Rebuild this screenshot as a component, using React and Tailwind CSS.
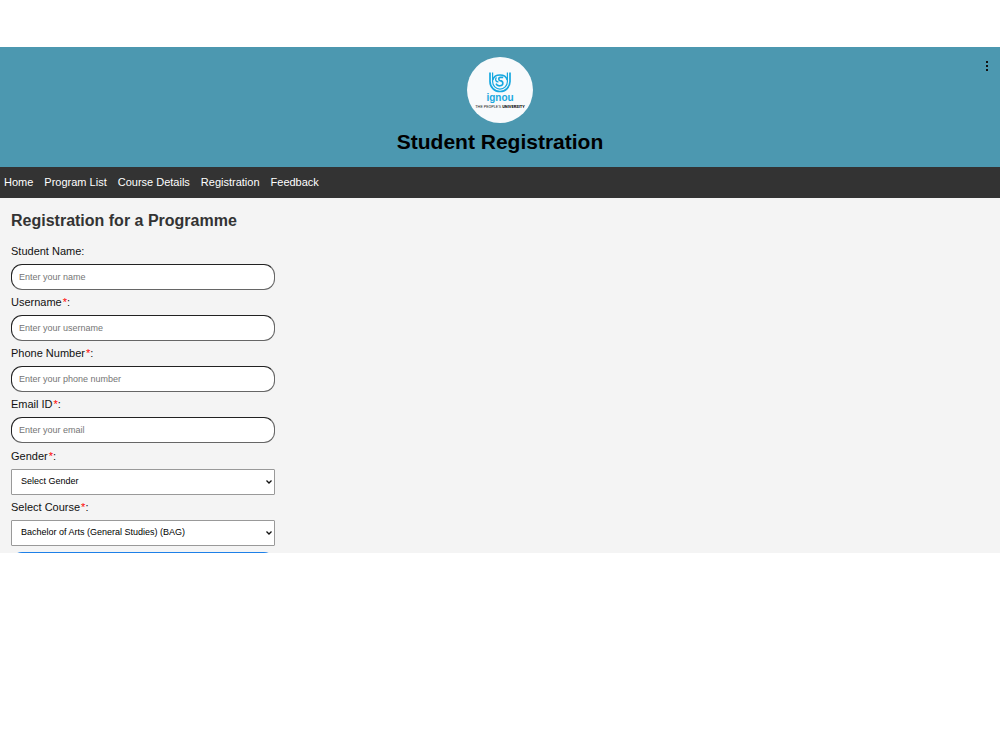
import React, { useState } from 'react';

const navLinks = ['Home', 'Program List', 'Course Details', 'Registration', 'Feedback'];

const textFields = [
  { id: 'name', label: 'Student Name', placeholder: 'Enter your name', type: 'text', required: false },
  { id: 'username', label: 'Username', placeholder: 'Enter your username', type: 'text', required: true },
  { id: 'phone', label: 'Phone Number', placeholder: 'Enter your phone number', type: 'tel', required: true },
  { id: 'email', label: 'Email ID', placeholder: 'Enter your email', type: 'email', required: true },
];

const selectFields = [
  { id: 'gender', label: 'Gender', options: ['Select Gender', 'Male', 'Female', 'Other'] },
  {
    id: 'course',
    label: 'Select Course',
    options: ['Bachelor of Arts (General Studies) (BAG)', 'Bachelor of Commerce (BCOM)', 'Bachelor of Science (BSC)'],
  },
];

const Logo = () => (
  <div className="flex h-[66px] w-[66px] flex-col items-center rounded-full bg-[#f8fafc] pt-[15px]">
    <svg viewBox="0 0 22 21" className="h-[21px] w-[22px]" fill="none" stroke="#18a8e0" aria-hidden="true">
      <path d="M1 0.5V9.5A10 10 0 0 0 21 9.5V0.5" strokeWidth="1.7" />
      <path d="M3.6 0.5V9.5A7.4 7.6 0 0 0 18.4 9.5V0.5" strokeWidth="1.2" />
      <path d="M3.8 8A7.4 6.4 0 0 1 18.2 8" strokeWidth="1.5" />
      <path d="M7.4 5.4C5.6 8 7 10 9.5 9.8" strokeWidth="1.3" />
      <path d="M14.2 5.4H11.2C9.4 5.4 9.2 8.4 11 8.6C14.6 8.8 15 13.4 11 13.8C9.2 14 7.6 13 7 11.6" strokeWidth="1.6" />
    </svg>
    <span className="text-[10px] leading-[10px] font-bold text-[#18a8e0]">ignou</span>
    <span className="mt-px text-[4px] leading-[5px] whitespace-nowrap text-[#222] font-['Roboto',sans-serif]">
      THE PEOPLE'S <b className="text-black">UNIVERSITY</b>
    </span>
  </div>
);

const FieldLabel = ({ id, label, required }) => (
  <label htmlFor={id} className="mb-[5px] block text-[11px] leading-4 text-[#111]">
    {label}
    {required && <span className="ml-px text-[#f00]">*</span>}:
  </label>
);

const App = () => {
  const [form, setForm] = useState({ name: '', username: '', phone: '', email: '', gender: 'Select Gender', course: 'Bachelor of Arts (General Studies) (BAG)' });

  const handleChange = (e) => {
    setForm({ ...form, [e.target.id]: e.target.value });
  };

  return (
    <div className="bg-white pt-[47px] font-['Liberation_Sans',Arial,sans-serif]">
      <header className="relative flex flex-col items-center bg-[#4c98b0] pt-[10px] pb-[11px]">
        <Logo />
        <h1 className="mt-[5px] text-[21px] leading-7 font-bold text-black">Student Registration</h1>
        <button type="button" aria-label="Menu" className="absolute top-3 right-2 flex h-[14px] w-[10px] items-center justify-center">
          <svg viewBox="0 0 10 14" className="h-[14px] w-[10px]" fill="#111" aria-hidden="true">
            <path d="M4 2h2v2H4zM4 6h2v2H4zM4 10h2v2H4z" />
          </svg>
        </button>
      </header>

      <nav className="flex gap-[11px] bg-[#333] px-1 py-[7px]">
        {navLinks.map((link) => (
          <a key={link} href="#" className="text-[11px] leading-[17px] text-white">{link}</a>
        ))}
      </nav>

      <main className="max-h-[355px] overflow-hidden bg-[#f4f4f4] px-[11px] pt-[13px]">
        <h2 className="mb-3 text-[16px] leading-5 font-bold text-[#333]">Registration for a Programme</h2>
        <form className="flex max-w-[264px] flex-col gap-[5px]" onSubmit={(e) => e.preventDefault()}>
          <div className="flex flex-col gap-1">
            {textFields.map((field) => (
              <div key={field.id}>
                <FieldLabel id={field.id} label={field.label} required={field.required} />
                <input
                  id={field.id}
                  type={field.type}
                  value={form[field.id]}
                  onChange={handleChange}
                  placeholder={field.placeholder}
                  required={field.required}
                  className="block h-[26px] w-full rounded-[11px] border border-t-[#222] border-r-[#666] border-b-[#666] border-l-[#222] bg-white px-[7px] text-[9px] text-black placeholder:text-[#757575]"
                />
              </div>
            ))}
          </div>
          <div className="flex flex-col gap-1">
            {selectFields.map((field) => (
              <div key={field.id}>
                <FieldLabel id={field.id} label={field.label} required />
                <div className="relative">
                  <select
                    id={field.id}
                    value={form[field.id]}
                    onChange={handleChange}
                    className="block h-[26px] w-full appearance-none rounded-[1px] border border-[#999] bg-white pr-4 pl-[9px] text-[9px] text-black"
                  >
                    {field.options.map((option) => (
                      <option key={option}>{option}</option>
                    ))}
                  </select>
                  <svg viewBox="0 0 6 4" className="pointer-events-none absolute top-[11px] right-[3px] h-1 w-[6px]" fill="none" stroke="#111" strokeWidth="1.3" aria-hidden="true">
                    <path d="M0.5 0.5L3 3L5.5 0.5" />
                  </svg>
                </div>
              </div>
            ))}
          </div>
          <button type="submit" aria-label="Register" className="mt-px h-[26px] w-full rounded-[11px] bg-[#1e80e8]" />
        </form>
      </main>
    </div>
  );
};

export default App;
